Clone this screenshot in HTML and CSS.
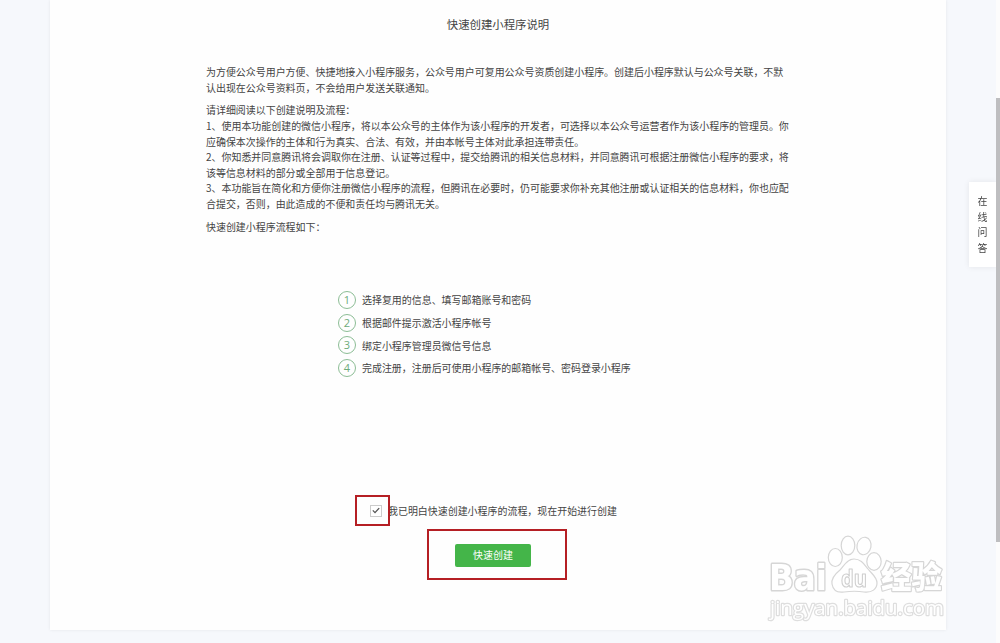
FILE: index.html
```html
<!DOCTYPE html>
<html lang="zh-CN">
<head>
    <meta charset="UTF-8">
    <meta name="viewport" content="width=device-width, initial-scale=1.0">
    <title>快速创建小程序说明</title>
    <link rel="stylesheet" href="styles.css">
</head>
<body>
    <div class="page">
        <div class="card">
            <h2 class="title">快速创建小程序说明</h2>
            <div class="desc">
                <p>为方便公众号用户方便、快捷地接入小程序服务，公众号用户可复用公众号资质创建小程序。创建后小程序默认与公众号关联，不默<br>认出现在公众号资料页，不会给用户发送关联通知。</p>
                <p>请详细阅读以下创建说明及流程：<br>1、使用本功能创建的微信小程序，将以本公众号的主体作为该小程序的开发者，可选择以本公众号运营者作为该小程序的管理员。你<br>应确保本次操作的主体和行为真实、合法、有效，并由本帐号主体对此承担连带责任。<br>2、你知悉并同意腾讯将会调取你在注册、认证等过程中，提交给腾讯的相关信息材料，并同意腾讯可根据注册微信小程序的要求，将<br>该等信息材料的部分或全部用于信息登记。<br>3、本功能旨在简化和方便你注册微信小程序的流程，但腾讯在必要时，仍可能要求你补充其他注册或认证相关的信息材料，你也应配<br>合提交，否则，由此造成的不便和责任均与腾讯无关。</p>
                <p>快速创建小程序流程如下：</p>
            </div>
            <ul class="steps">
                <li><span class="num">1</span>选择复用的信息、填写邮箱账号和密码</li>
                <li><span class="num">2</span>根据邮件提示激活小程序帐号</li>
                <li><span class="num">3</span>绑定小程序管理员微信号信息</li>
                <li><span class="num">4</span>完成注册，注册后可使用小程序的邮箱帐号、密码登录小程序</li>
            </ul>
            <div class="agree">
                <span class="checkbox">
                    <svg width="8" height="7" viewBox="0 0 8 7"><path d="M0.8 3.4 L3 5.6 L7.2 1.1" fill="none" stroke="#555" stroke-width="1.3"/></svg>
                    <span class="mark mark-check"></span>
                </span>
                <span>我已明白快速创建小程序的流程，现在开始进行创建</span>
            </div>
            <div class="action">
                <button class="btn">快速创建</button>
                <span class="mark mark-btn"></span>
            </div>
        </div>
    </div>

    <div class="side-tab">在<br>线<br>问<br>答</div>
    <div class="scrollbar"><div class="thumb"></div></div>

    <!-- watermark -->
    <svg class="watermark" width="200" height="100" viewBox="0 0 200 100">
        <g fill="#fff" stroke="#d6d6d6" stroke-width="1.2" stroke-linejoin="round">
            <text class="wm-bai" x="9" y="55" textLength="58" lengthAdjust="spacingAndGlyphs">Bai</text>
            <text class="wm-cjk" x="121" y="53" textLength="61" lengthAdjust="spacingAndGlyphs">经验</text>
            <ellipse cx="75.3" cy="22.5" rx="7" ry="9"/>
            <ellipse cx="88" cy="10.5" rx="6.8" ry="9.3"/>
            <ellipse cx="104" cy="11" rx="7" ry="8.8" transform="rotate(12 104 11)"/>
            <ellipse cx="114" cy="26.5" rx="7.2" ry="8.8"/>
            <path d="M94 24 C87 24 84 31 80 35 C75 39 71 43 72 49 C73 55 77 58 84 57 C91 56 98 56 104 57 C112 58 117 54 117 48 C117 42 112 39 108 34 C104 29 101 24 94 24 Z"/>
            <text class="wm-du" x="81" y="52" textLength="26" lengthAdjust="spacingAndGlyphs">du</text>
            <text class="wm-url" x="10" y="80" textLength="174" lengthAdjust="spacingAndGlyphs">jingyan.baidu.com</text>
        </g>
    </svg>
</body>
</html>
```
FILE: styles.css
```css
* {
    box-sizing: border-box;
}
body {
    margin: 0;
    height: 643px;
    overflow: hidden;
    background-color: #f6f8fc;
    font-family: "Noto Sans CJK SC", sans-serif;
    font-size: 9.96px;
    line-height: 15.6px;
    color: #444;
}
.page {
    padding-left: 50px;
}
.card {
    width: 896px;
    height: 630px;
    padding-top: 14px;
    background-color: #fefefe;
    box-shadow: 0 0 3px rgba(0, 0, 0, 0.08);
    display: flex;
    flex-direction: column;
}
.title {
    margin: 0;
    font-size: 11.4px;
    font-weight: normal;
    line-height: 20px;
    text-align: center;
}
.desc {
    margin: 30px 0 0 156px;
    white-space: nowrap;
}
.desc p {
    margin: 0 0 7.2px;
}
.steps {
    list-style: none;
    margin: 47px 0 0 288px;
    padding: 0;
}
.steps li {
    display: flex;
    align-items: center;
    gap: 7px;
    height: 22.8px;
}
.num {
    width: 18px;
    height: 18px;
    margin-right: -1px;
    border: 1px solid #8cbd95;
    border-radius: 50%;
    font-family: "Open Sans", sans-serif;
    font-size: 11px;
    line-height: 16px;
    text-align: center;
    color: #6dab79;
}
.agree {
    display: flex;
    align-items: center;
    gap: 6px;
    margin: 123px 0 0 320px;
    height: 16px;
}
.checkbox {
    position: relative;
    display: flex;
    align-items: center;
    justify-content: center;
    width: 12px;
    height: 12px;
    border: 1px solid #ccc;
    background-color: #fff;
}
.mark {
    position: absolute;
    border: 2px solid #b51f24;
}
.mark-check {
    left: -16px;
    top: -11px;
    width: 35px;
    height: 31px;
}
.action {
    position: relative;
    width: 76px;
    margin: 25px 0 0 405px;
}
.btn {
    display: block;
    width: 76px;
    height: 23px;
    padding: 0;
    border: none;
    border-radius: 2px;
    background-color: #44b549;
    color: #fff;
    font: inherit;
}
.mark-btn {
    left: -28px;
    top: -15px;
    width: 140px;
    height: 51px;
}
.side-tab {
    position: fixed;
    top: 182px;
    right: 4px;
    width: 27px;
    height: 85px;
    padding-top: 11px;
    background-color: #fff;
    box-shadow: 0 0 6px rgba(0, 0, 0, 0.08);
    text-align: center;
}
.scrollbar {
    position: fixed;
    top: 0;
    right: 0;
    width: 4px;
    height: 643px;
    padding-top: 98px;
    background-color: #fcfcfc;
}
.thumb {
    height: 444px;
    background-color: #bebec0;
}
.watermark {
    position: fixed;
    left: 760px;
    top: 535px;
}
.wm-bai {
    font-family: "DejaVu Sans", sans-serif;
    font-weight: bold;
    font-size: 36px;
    stroke-width: 3px;
    paint-order: stroke;
}
.wm-cjk {
    font-family: "Noto Sans CJK SC", sans-serif;
    font-weight: 900;
    font-size: 31px;
    stroke-width: 2.4px;
    paint-order: stroke;
}
.wm-du {
    font-family: "Open Sans", sans-serif;
    font-weight: bold;
    font-size: 23px;
    stroke: #cfcfcf;
}
.wm-url {
    font-family: "Open Sans", sans-serif;
    font-size: 20px;
    stroke: #dedede;
    stroke-width: 2.4px;
    paint-order: stroke;
}
```
